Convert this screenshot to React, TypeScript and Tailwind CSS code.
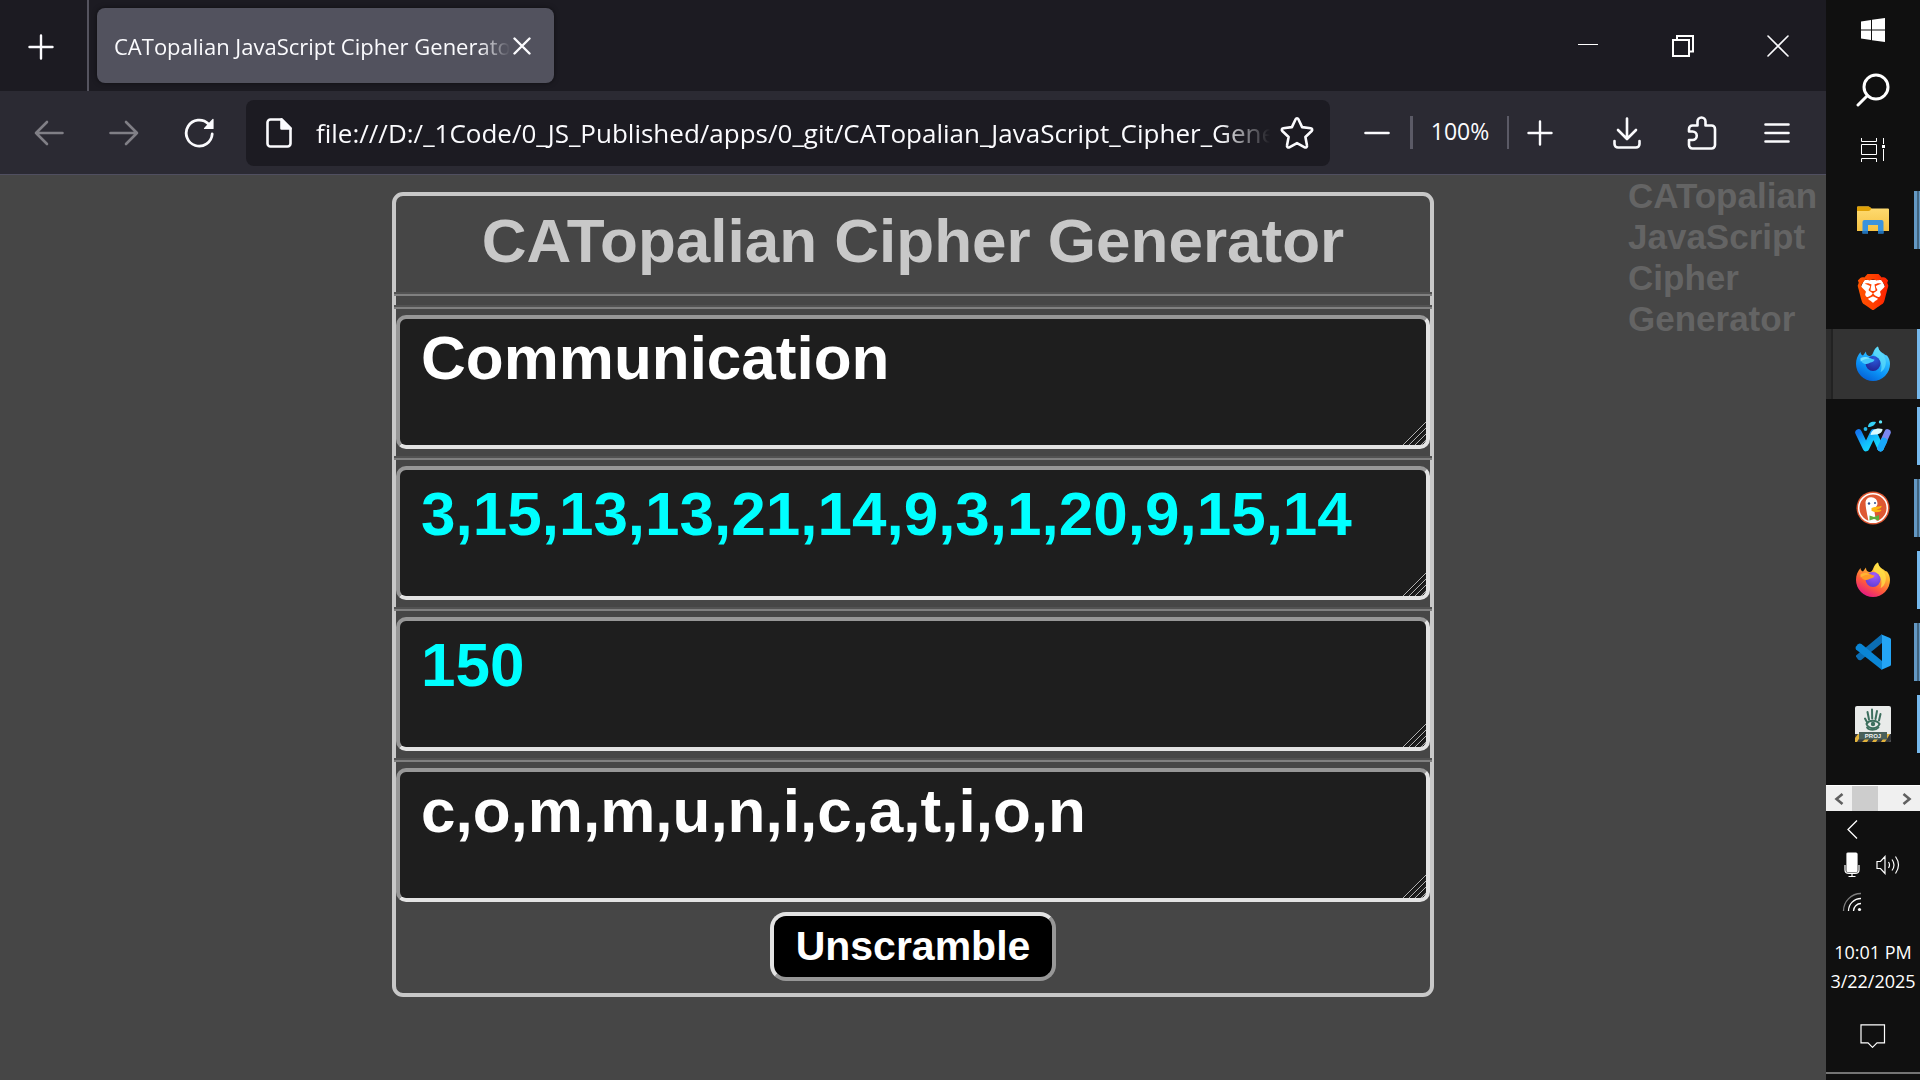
import React from "react";
import { SiBrave } from "react-icons/si";

const line = {
  fill: "none",
  stroke: "currentColor",
  strokeLinecap: "round" as const,
  strokeLinejoin: "round" as const,
};

/* ---------- browser icons ---------- */

function PlusIcon() {
  return (
    <svg width="26" height="26" viewBox="0 0 26 26" {...line} strokeWidth="2.4">
      <path d="M13 1.5v23M1.5 13h23" />
    </svg>
  );
}

function MinusIcon() {
  return (
    <svg width="26" height="26" viewBox="0 0 26 26" {...line} strokeWidth="2.6">
      <path d="M1.5 13h23" />
    </svg>
  );
}

function ArrowIcon({ flip = false }: { flip?: boolean }) {
  return (
    <svg width="30" height="26" viewBox="0 0 30 26" {...line} strokeWidth="2.6" className={flip ? "rotate-180" : ""}>
      <path d="M28.500 13H2M13 2L2 13l11 11" />
    </svg>
  );
}

function ReloadIcon() {
  return (
    <svg width="30" height="30" viewBox="0 0 30 30" {...line} strokeWidth="2.8">
      <path d="M28.200 16A13 13 0 1 1 24.500 6" />
      <path d="M29 1.500v9h-8.500z" fill="currentColor" strokeWidth="1.200" />
    </svg>
  );
}

function PageIcon() {
  return (
    <svg width="26" height="30" viewBox="0 0 26 30" {...line} strokeWidth="2.6">
      <path d="M4.500 1.500h11l9 9v15a3 3 0 0 1-3 3h-17a3 3 0 0 1-3-3v-21a3 3 0 0 1 3-3z" />
      <path d="M15.500 1.500v9h9z" fill="currentColor" />
    </svg>
  );
}

function StarIcon() {
  return (
    <svg width="34" height="34" viewBox="0 0 34 34" {...line} strokeWidth="2.6">
      <path d="M15.600 3.200c.6-1.300 2.200-1.300 2.800 0l3.700 7.900 8.600 1.100c1.400.2 2 1.800 1 2.800l-6.300 6 1.600 8.600c.3 1.400-1.100 2.400-2.300 1.700L17 27.100l-7.700 4.200c-1.200.7-2.600-.3-2.300-1.700l1.600-8.600-6.300-6c-1-1-.4-2.600 1-2.800l8.600-1.100z" />
    </svg>
  );
}

function DownloadIcon() {
  return (
    <svg width="28" height="32" viewBox="0 0 28 32" {...line} strokeWidth="2.6">
      <path d="M14 1.500v20M5 13l9 9 9-9" />
      <path d="M1.500 24v3a3.500 3.500 0 0 0 3.500 3.500h18a3.500 3.500 0 0 0 3.500-3.500v-3" />
    </svg>
  );
}

function PuzzleIcon() {
  return (
    <svg width="30" height="34" viewBox="0 0 30 34" {...line} strokeWidth="2.6">
      <path d="M10.500 9.500V5.500a4 4 0 0 1 8 0v4h6a3.500 3.500 0 0 1 3.500 3.500v16a3.500 3.500 0 0 1-3.500 3.500h-19a3.500 3.500 0 0 1-3.500-3.500v-5h3.500a4 4 0 0 0 0-8.500H2v-2.500a3.500 3.500 0 0 1 3.500-3.500z" />
    </svg>
  );
}

function MenuIcon() {
  return (
    <svg width="26" height="22" viewBox="0 0 26 22" {...line} strokeWidth="2.6">
      <path d="M1.500 2.500h23M1.500 11h23M1.500 19.500h23" />
    </svg>
  );
}

/* ---------- taskbar icons ---------- */

function WindowsLogo() {
  return (
    <svg width="24" height="24" viewBox="0 0 24 24" fill="#fff">
      <path d="M0 3.400L10 2v9.500H0zM11 1.800L24 0v11.500H11zM0 12.500h10V22L0 20.600zM11 12.500h13V24l-13-1.800z" />
    </svg>
  );
}

function SearchIcon() {
  return (
    <svg width="34" height="34" viewBox="0 0 34 34" {...line} strokeWidth="3">
      <circle cx="20" cy="14" r="12" />
      <path d="M11.500 22.500L2 32" />
    </svg>
  );
}

function TaskViewIcon() {
  return (
    <svg width="24" height="24" viewBox="0 0 24 24" fill="none" stroke="#fff" strokeWidth="1">
      <path d="M.5 0v3.500h15V0M.5 6.500h15v10H.5zM.5 24v-3.500h15V24M22.500 0v6M22.500 11v12" />
      <path d="M21 7h3v3h-3z" fill="#fff" stroke="none" />
    </svg>
  );
}

function ExplorerIcon() {
  return (
    <svg width="32" height="28" viewBox="0 0 32 28">
      <defs>
        <linearGradient id="fold" x1="0" y1="0" x2="0" y2="1">
          <stop offset="0" stopColor="#ffdc73" />
          <stop offset="1" stopColor="#f5c243" />
        </linearGradient>
      </defs>
      <path d="M0 1.500Q0 .5 1 .5h10.500l3 2H31q1 0 1 1V25H0z" fill="url(#fold)" />
      <path d="M0 1.500Q0 .5 1 .5h10.500q1.500 0 3 2-1.500 2.500-3 2.500H0z" fill="#e0a106" />
      <path d="M5.500 27.500V16a2 2 0 0 1 2-2h17a2 2 0 0 1 2 2v11.500H21V19H11v8.500z" fill="#3a93dd" />
      <path d="M5.500 25h5.500v2.500H5.500zM21 25h5.500v2.500H21z" fill="#1f6fb5" />
    </svg>
  );
}

function BraveIcon() {
  return (
    <span className="relative block size-9">
      <svg width="36" height="36" viewBox="0 0 36 36" className="absolute inset-0">
        <defs>
          <linearGradient id="brv" x1="0" y1="0" x2="1" y2="0">
            <stop offset="0" stopColor="#ff5601" />
            <stop offset=".5" stopColor="#ff4000" />
            <stop offset="1" stopColor="#ff1f01" />
          </linearGradient>
        </defs>
        <path d="M9 6h18l4 9-5 14-8 5-8-5L5 15z" fill="#fff" />
      </svg>
      <SiBrave size={36} className="absolute inset-0 fill-[url(#brv)]" aria-hidden="true" />
    </span>
  );
}

function FoxIcon({ dev = false }: { dev?: boolean }) {
  const id = dev ? "dev" : "std";
  return (
    <svg width="34" height="36" viewBox="0 0 34 36">
      <defs>
        <linearGradient id={id + "b"} x1=".85" y1="0" x2=".3" y2="1">
          <stop offset="0" stopColor={dev ? "#80ebff" : "#fff44f"} />
          <stop offset=".35" stopColor={dev ? "#29b9ff" : "#ffb02e"} />
          <stop offset=".68" stopColor={dev ? "#0a90f5" : "#ff5a3c"} />
          <stop offset="1" stopColor={dev ? "#0560d6" : "#e31587"} />
        </linearGradient>
        <radialGradient id={id + "g"} cx=".6" cy=".2" r=".9">
          <stop offset="0" stopColor={dev ? "#2a5bdc" : "#a35bff"} />
          <stop offset="1" stopColor={dev ? "#20208f" : "#5a3bd0"} />
        </radialGradient>
      </defs>
      <path d="M4.500 6c0 2 1 3 2.500 3.500L10 5.500c0 2 .5 3.500 3 4.500 2 .5 3-1 4-3 1-3.500 3-5.500 5-6.500.3 3 2 5 4.500 6.500 2 1 3 2.500 4.500 2.500 2 2.500 3 5.500 3 8.500a17 17 0 0 1-34 0c0-5 1.500-8.500 4.500-12z" fill={`url(#${id}b)`} />
      <path d="M17.500 8c1-4 2.500-6.500 4.500-7.500.3 3 2 5 4.500 7.500 3.500 4 4.500 9 2 14-1 2-2.500 3.500-4 4 2-5 1-10-2.500-13.500-1.500-1.500-3.500-2.500-4.500-4.500z" fill={dev ? "#5fdcf8" : "#ffe14a"} opacity=".75" />
      <circle cx="17" cy="17.500" r="7.500" fill={`url(#${id}g)`} />
      <path d="M4.500 13c3-2.500 7-2.500 9.500-1 1.500 1 3 1.200 4.500 1.700-.5 1.800-2.500 2.300-4 2.800-1.500.6-2.500 1.500-4 1.500-3 0-5.500-2-6-5z" fill={dev ? "#45c8fb" : "#ff9a27"} />
      <path d="M4.500 12c3-1.500 7-1.500 9 .5-3 0-6 1-9 3z" fill={dev ? "#8cecff" : "#ffc03a"} opacity=".7" />
    </svg>
  );
}

function WaterfoxIcon() {
  return (
    <svg width="36" height="32" viewBox="0 0 36 32">
      <defs>
        <linearGradient id="wf" x1="0" y1="0" x2="1" y2="1">
          <stop offset="0" stopColor="#1478f0" />
          <stop offset=".5" stopColor="#12bdfc" />
          <stop offset="1" stopColor="#16e3ff" />
        </linearGradient>
      </defs>
      <path d="M25.500 28L32.500 12.500" stroke="#7b88f2" strokeWidth="6.500" strokeLinecap="round" />
      <path d="M3.500 12.500L11 28l7.500-15.500L25.500 28" fill="none" stroke="url(#wf)" strokeWidth="6.500" strokeLinecap="round" strokeLinejoin="round" />
      <path d="M25.500 28l3.500-7" stroke="#18a8fb" strokeWidth="6.500" strokeLinecap="round" />
      <path d="M15.500 15c1-6 7-7.500 12-6 0 4-4 5.500-7 5.500z" fill="#d9fbff" />
      <path d="M13 7c0-4.500 4-6 8-5-1 3-4 5-8 5z" fill="#35d2f7" />
      <circle cx="25.500" cy="1.900" r="1.700" fill="#5fe6fa" />
      <circle cx="10.500" cy="9" r="1.900" fill="#25b7e8" />
    </svg>
  );
}

function DuckIcon() {
  return (
    <svg width="34" height="34" viewBox="0 0 34 34">
      <circle cx="17" cy="17" r="16.500" fill="#de5833" />
      <circle cx="17" cy="17" r="14.300" fill="none" stroke="#fff" strokeWidth="1.500" />
      <path d="M9.500 11c.5-3.500 3-5 6-4.700 3.500.2 6 2.700 6 6.200 0 3-3 4-3 7 0 4 1 7 2.500 11-3 1-6 .8-8.500-.2-1-6-3-12.500-3-19.300z" fill="#fff" />
      <path d="M15.500 17c2.500-1.500 7-.8 10-2.200.5 2.200-3 3.200-5 3.700 2 .5 4 0 5 .5-1 2.500-7 3-10 .8z" fill="#fdb811" />
      <path d="M13.500 24.500l4.500 1.500 5-2v5.500l-5-1.500-4.500 1.500z" fill="#5cad3c" />
      <circle cx="13" cy="12.500" r="1.200" fill="#2d4f8e" />
      <circle cx="19" cy="12" r="1" fill="#2d4f8e" />
    </svg>
  );
}

function CodeIcon() {
  return (
    <svg width="36" height="36" viewBox="0 0 36 36">
      <path d="M1 22.500l2 3q1.500 1.500 3.500.3L27 9V0L1 21.500z" fill="#0b6db3" />
      <path d="M1 12.500l2-2.200q1.500-1.300 3.500-.2L27 27v9L1 15.500q-1-1.500 0-3z" fill="#0a86d6" />
      <path d="M26 .2L35 4q1 .5 1 1.500v25q0 1-1 1.500l-9 4q1 0 1-1.500v-33Q27 .2 26 .2z" fill="#24a5f5" />
    </svg>
  );
}

function ProjectIcon() {
  return (
    <svg width="36" height="36" viewBox="0 0 36 36">
      <rect width="36" height="36" rx="2" fill="#e9ebea" />
      <g stroke="#3d6f5e" strokeLinecap="round" fill="none">
        <path d="M14 13.500L12.500 6M17.200 12.500L17 3.500M20.500 13l1.500-8M24 14.500L25.500 8" strokeWidth="2" />
        <path d="M12.500 17L10 12.500" strokeWidth="2" />
        <path d="M11.500 18c2-4.500 10.500-4.500 13 0-2 5.500-11 5.500-13 0z" strokeWidth="2" />
        <path d="M12 21.500c2 3 9 3 11.500 0" strokeWidth="1.800" />
      </g>
      <circle cx="18" cy="18" r="2.200" fill="#3d6f5e" />
      <path d="M0 28h36v6a2 2 0 0 1-2 2H2a2 2 0 0 1-2-2z" fill="#34373b" />
      <path d="M0 32l3-4h4l-5 8H0zM7 36l3-3h4l-2 3zM17 36l2-3h4l-2 3zM26 36l5-8h4l-5 8z" fill="#e3b33c" />
      <rect x="4" y="26" width="28" height="7.500" fill="#49605a" />
      <text x="18" y="32" textAnchor="middle" fontSize="6" fontWeight="700" fontFamily="Liberation Sans, sans-serif" fill="#f2f4f3">PROJ</text>
    </svg>
  );
}

/* ---------- taskbar ---------- */

type AppEntry = { name: string; icon: React.ReactNode; open: "none" | "one" | "many"; active?: boolean };

const apps: AppEntry[] = [
  { name: "File Explorer", icon: <ExplorerIcon />, open: "many" },
  { name: "Brave", icon: <BraveIcon />, open: "none" },
  { name: "Firefox Developer Edition", icon: <FoxIcon dev />, open: "one", active: true },
  { name: "Waterfox", icon: <WaterfoxIcon />, open: "one" },
  { name: "DuckDuckGo", icon: <DuckIcon />, open: "many" },
  { name: "Firefox", icon: <FoxIcon />, open: "one" },
  { name: "Visual Studio Code", icon: <CodeIcon />, open: "many" },
  { name: "Project", icon: <ProjectIcon />, open: "one" },
];

function TaskButton({ app }: { app: AppEntry }) {
  return (
    <button
      aria-label={app.name}
      className={
        app.active
          ? "relative my-px flex h-[70px] items-center justify-center bg-[#333333]"
          : "relative flex h-[72px] items-center justify-center"
      }
    >
      {app.active && <span className="absolute inset-y-0 left-0 w-[7px] border-r-2 border-[#222222] bg-[#2b2b2b]" />}
      {app.icon}
      {app.open === "one" && (
        <span className={app.active ? "absolute inset-y-0 right-0 w-[3px] bg-[#76b9ed]" : "absolute inset-y-[7px] right-0 w-[3px] bg-[#76b9ed]"} />
      )}
      {app.open === "many" && (
        <span className="absolute inset-y-[7px] right-0 flex w-[6px] bg-[#6398c4]">
          <span className="ml-[3px] w-[2px] bg-[#41647f]" />
        </span>
      )}
    </button>
  );
}

function Taskbar() {
  return (
    <aside className="flex w-[94px] shrink-0 flex-col bg-[#101010] font-['Open_Sans',sans-serif] text-white">
      <button aria-label="Start" className="flex h-[60px] items-center justify-center"><WindowsLogo /></button>
      <button aria-label="Search" className="flex h-[60px] items-center justify-center"><SearchIcon /></button>
      <button aria-label="Task view" className="mb-1 flex h-[60px] items-center justify-center"><TaskViewIcon /></button>
      {apps.map((a) => <TaskButton key={a.name} app={a} />)}
      <div className="mt-[25px] flex h-[26px] items-stretch border-t border-white bg-[#f0f0f0] text-[#606060]">
        <button aria-label="Scroll left" className="flex w-[26px] items-center justify-center">
          <svg width="10" height="12" viewBox="0 0 10 12" fill="none" stroke="currentColor" strokeWidth="2.600"><path d="M8.500 1L2.500 6l6 5" /></svg>
        </button>
        <span className="w-[26px] bg-[#cdcdcd]" />
        <button aria-label="Scroll right" className="ml-auto flex w-[26px] items-center justify-center">
          <svg width="10" height="12" viewBox="0 0 10 12" fill="none" stroke="currentColor" strokeWidth="2.600"><path d="M1.500 1l6 5-6 5" /></svg>
        </button>
      </div>
      <div className="grid grid-cols-[36px_36px] justify-items-center pt-[8px] pl-2">
        <button aria-label="Show hidden icons" className="flex h-[20px] items-center">
          <svg width="11" height="19" viewBox="0 0 11 19" fill="none" stroke="#fff" strokeWidth="1.300"><path d="M10 .5l-9 9 9 9" /></svg>
        </button>
        <span />
        <button aria-label="Microphone" className="mt-[13px] flex h-[26px] items-center">
          <svg width="16" height="26" viewBox="0 0 16 26" fill="none" stroke="#fff" strokeWidth="1.200">
            <rect x="3" y="1" width="10" height="19" rx="1" fill="#fff" />
            <path d="M1 13v5q0 3.500 4 3.500h6q4 0 4-3.500v-5M8 21.500V24M4.500 24.500h7" />
          </svg>
        </button>
        <button aria-label="Volume" className="mt-[13px] flex h-[26px] items-center">
          <svg width="24" height="20" viewBox="0 0 24 20" fill="none" stroke="#fff" strokeWidth="1.200">
            <path d="M1 6.500h3.500L9 1.500v17l-4.500-5H1zM12.500 7q2 3 0 6M16 4.500q4 5.500 0 11M19.500 1.500q6 8.500 0 17" />
          </svg>
        </button>
        <button aria-label="Network" className="mt-[14px] flex h-[20px] items-center">
          <svg width="20" height="20" viewBox="0 0 20 20" fill="none" stroke="#fff" strokeWidth="1.300">
            <path d="M1.500 19A17.500 17.500 0 0 1 19 1.500" stroke="#7d7d7d" />
            <path d="M6.500 19A12.500 12.500 0 0 1 19 6.500M11.500 19A7.500 7.500 0 0 1 19 11.500" />
            <circle cx="17.500" cy="17.500" r="1.600" fill="#fff" stroke="none" />
          </svg>
        </button>
      </div>
      <div className="mt-[26px] flex flex-col items-center text-[18px] leading-[29px] whitespace-nowrap">
        <span>10:01 PM</span>
        <span>3/22/2025</span>
      </div>
      <button aria-label="Notifications" className="mt-[28px] flex h-6 items-center justify-center">
        <svg width="26" height="24" viewBox="0 0 26 24" fill="none" stroke="#fff" strokeWidth="1.200">
          <path d="M1 .8h23.500v18H17l-4.500 4.500-4.500-4.500H1z" />
        </svg>
      </button>
      <button aria-label="Show desktop" className="mt-auto h-2 border-t-2 border-[#757575]" />
    </aside>
  );
}

/* ---------- browser chrome ---------- */

function TitleBar() {
  return (
    <header className="flex h-[91px] bg-[#1c1b22] text-[#fbfbfe]">
      <button aria-label="New tab" className="flex w-[89px] items-center justify-center border-r-2 border-[#55545f] pr-[6px] pt-[3px]">
        <PlusIcon />
      </button>
      <div className="my-2 ml-2 flex w-[457px] items-center rounded-lg bg-[#52525e] pl-[17px] shadow-[0_0_5px_rgba(0,0,0,0.5)]">
        <span className="w-[396px] overflow-hidden pt-[2px] text-[22px] whitespace-nowrap [mask-image:linear-gradient(to_right,#000_365px,transparent_396px)]">
          CATopalian JavaScript Cipher Generator
        </span>
        <button aria-label="Close tab" className="ml-[3px]">
          <svg width="18" height="18" viewBox="0 0 18 18" {...line} strokeWidth="2.400"><path d="M1.500 1.500l15 15M16.500 1.500l-15 15" /></svg>
        </button>
      </div>
      <div className="ml-auto flex pr-px">
        <button aria-label="Minimize" className="flex w-[95px] items-center justify-center">
          <svg width="20" height="24" viewBox="0 0 20 24" fill="none" stroke="#fff" strokeWidth="1"><path d="M0 10.500h20" /></svg>
        </button>
        <button aria-label="Restore" className="flex w-[95px] items-center justify-center">
          <svg width="22" height="22" viewBox="0 0 22 22" fill="none" stroke="#fff" strokeWidth="2"><path d="M1 5h16v16H1zM5 5V1h16v15.500h-4" /></svg>
        </button>
        <button aria-label="Close window" className="flex w-[95px] items-center justify-center">
          <svg width="22" height="22" viewBox="0 0 22 22" {...line} strokeWidth="1.600"><path d="M1 1l20 20M21 1L1 21" /></svg>
        </button>
      </div>
    </header>
  );
}

function NavBar() {
  return (
    <nav className="flex h-[84px] items-center border-b border-[#504f60] bg-[#2b2a33] pr-3 pl-[11px] text-[#fbfbfe]">
      <button aria-label="Back" className="flex w-[75px] justify-center text-[#807f86]"><ArrowIcon /></button>
      <button aria-label="Forward" className="flex w-[75px] justify-center text-[#807f86]"><ArrowIcon flip /></button>
      <button aria-label="Reload" className="flex w-[75px] justify-center"><ReloadIcon /></button>
      <div className="ml-[10px] flex h-[66px] min-w-0 flex-1 items-center rounded-lg bg-[#1c1b22] pr-4 pl-5">
        <PageIcon />
        <input
          aria-label="Address"
          defaultValue="file:///D:/_1Code/0_JS_Published/apps/0_git/CATopalian_JavaScript_Cipher_Generator"
          className="ml-6 h-12 min-w-0 flex-1 bg-transparent text-[26px] outline-none [mask-image:linear-gradient(to_left,transparent_10px,#000_60px)]"
        />
        <button aria-label="Bookmark this page"><StarIcon /></button>
      </div>
      <button aria-label="Zoom out" className="ml-[14px] flex w-[66px] justify-center"><MinusIcon /></button>
      <span className="h-[33px] w-[3px] bg-[#5b5a66]" />
      <button className="w-[94px] pb-[2px] text-center text-[23px]">100%</button>
      <span className="h-[33px] w-[2px] bg-[#5b5a66]" />
      <button aria-label="Zoom in" className="flex w-[62px] justify-center"><PlusIcon /></button>
      <button aria-label="Downloads" className="ml-[18px] flex w-[75px] justify-center"><DownloadIcon /></button>
      <button aria-label="Extensions" className="flex w-[75px] justify-center"><PuzzleIcon /></button>
      <button aria-label="Menu" className="flex w-[75px] justify-center"><MenuIcon /></button>
    </nav>
  );
}

/* ---------- page ---------- */

function Rule() {
  return <hr className="-mx-0.5 h-1 border-t-2 border-b-2 border-t-[#525252] border-b-[#808080]" />;
}

function Field({ label, value, numeric = false }: { label: string; value: string; numeric?: boolean }) {
  return (
    <div className="relative mb-px h-[134px]">
      <textarea
        aria-label={label}
        defaultValue={value}
        className={
          numeric
            ? "block size-full resize-none overflow-hidden rounded-[10px] border-4 border-t-[#979797] border-r-[#e3e3e3] border-b-[#e3e3e3] border-l-[#979797] bg-[#1e1e1e] px-[21px] pt-2 text-[62px] leading-[71px] font-bold text-[#00ffff] outline-none"
            : "block size-full resize-none overflow-hidden rounded-[10px] border-4 border-t-[#979797] border-r-[#e3e3e3] border-b-[#e3e3e3] border-l-[#979797] bg-[#1e1e1e] px-[21px] pt-[3px] text-[62px] leading-[71px] font-bold text-white outline-none"
        }
      />
      <svg width="23" height="23" viewBox="0 0 23 23" className="pointer-events-none absolute right-1 bottom-1" fill="none">
        <path d="M0 23L23 0M6 23L23 6M12 23l11-11M18 23l5-5" stroke="#b0b0b0" strokeWidth="1" />
        <path d="M1.500 23L23 1.500M7.500 23L23 7.500M13.500 23l9.500-9.500" stroke="#0c0c0c" strokeWidth="1" />
      </svg>
    </div>
  );
}

export default function App() {
  return (
    <div className="flex min-h-screen bg-[#464646]">
      <div className="flex min-w-0 flex-1 flex-col font-['Open_Sans',sans-serif]">
        <TitleBar />
        <NavBar />
        <main className="relative flex-1 px-5 pt-[17px] font-['Liberation_Sans',Arial,sans-serif]">
          <section className="mx-auto max-w-[1042px] rounded-[11px] border-4 border-[#c8c8c8]">
            <h1 className="pt-[9px] pb-4 text-center text-[62px] leading-[71px] font-bold text-[#c8c8c8]">
              CATopalian Cipher Generator
            </h1>
            <Rule />
            <div className="h-[9px]" />
            <div className="flex flex-col gap-[6px]">
              <Rule />
              <Field label="Message" value="Communication" />
              <Rule />
              <Field label="Cipher" value="3,15,13,13,21,14,9,3,1,20,9,15,14" numeric />
              <Rule />
              <Field label="Sum" value="150" numeric />
              <Rule />
              <Field label="Letters" value="c,o,m,m,u,n,i,c,a,t,i,o,n" />
            </div>
            <div className="flex justify-center pt-[9px] pb-3">
              <button className="rounded-2xl border-4 border-t-[#e3e3e3] border-r-[#979797] border-b-[#979797] border-l-[#e3e3e3] bg-black px-[22px] pt-[6px] pb-[7px] text-[41px] leading-[48px] font-bold text-white">
                Unscramble
              </button>
            </div>
          </section>
          <p className="absolute top-0 right-0 w-[198px] text-[35px] leading-[41px] font-bold text-[#646464]">
            CATopalian JavaScript Cipher Generator
          </p>
        </main>
      </div>
      <Taskbar />
    </div>
  );
}
